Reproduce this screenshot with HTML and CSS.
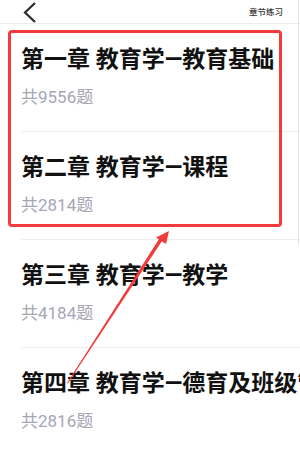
FILE: index.html
```html
<!DOCTYPE html>
<html lang="zh-CN">
<head>
    <meta charset="UTF-8">
    <meta name="viewport" content="width=device-width, initial-scale=1.0">
    <title>章节练习</title>
    <link rel="stylesheet" href="styles.css">
</head>
<body>
    <div class="page">
        <div class="topbar">
            <svg class="back" width="16" height="22" viewBox="0 0 16 22">
                <path d="M13 2 L3 11.5 L13 21" fill="none" stroke="#2b2b2b" stroke-width="2.2"/>
            </svg>
            <span class="topbar-title">章节练习</span>
        </div>

        <!-- 章节列表 -->
        <ul class="chapter-list">
            <li class="chapter">
                <div class="chapter-name">第一章 教育学—教育基础</div>
                <div class="chapter-count">共9556题</div>
            </li>
            <li class="chapter">
                <div class="chapter-name">第二章 教育学—课程</div>
                <div class="chapter-count">共2814题</div>
            </li>
            <li class="chapter">
                <div class="chapter-name">第三章 教育学—教学</div>
                <div class="chapter-count">共4184题</div>
            </li>
            <li class="chapter">
                <div class="chapter-name">第四章 教育学—德育及班级管理</div>
                <div class="chapter-count">共2816题</div>
            </li>
        </ul>

        <div class="scroll-line"></div>

        <!-- 标注 -->
        <div class="mark-box"></div>
        <svg class="mark-arrow" width="300" height="452" viewBox="0 0 300 452">
            <polygon points="67,383 67.8,383.4 163,239.5 160,237.5" fill="#f23b3b"/>
            <polygon points="169,231 166,244 156,237.5" fill="#f23b3b"/>
        </svg>
    </div>
</body>
</html>
```

FILE: styles.css
```css
* {
    margin: 0;
    padding: 0;
    box-sizing: border-box;
}

body {
    font-family: Roboto, 'Noto Sans CJK SC', sans-serif;
    background: #fff;
    color: #111;
}

.page {
    position: relative;
    width: 300px;
    height: 452px;
    overflow: hidden;
}

.topbar {
    height: 24px;
    border-bottom: 1px solid #ececec;
    display: flex;
    align-items: center;
    justify-content: space-between;
    padding: 0 17px 0 22px;
}

.back {
    display: block;
    margin-top: 1px;
}

.topbar-title {
    font-size: 8.5px;
    color: #333;
    font-weight: 500;
    margin-top: -1px;
}

.chapter-list {
    list-style: none;
}

.chapter {
    margin-left: 21px;
    padding: 22px 0 21px 0;
    border-bottom: 1px solid #ededed;
    white-space: nowrap;
}

.chapter-name {
    font-size: 23px;
    line-height: 28px;
    font-weight: 700;
    color: #111;
}

.chapter-count {
    margin-top: 10px;
    font-size: 17px;
    line-height: 26px;
    color: #a6a6b4;
}

.scroll-line {
    position: absolute;
    top: 0;
    right: 1px;
    width: 1px;
    height: 245px;
    background: #e6e6e6;
}

.mark-box {
    position: absolute;
    left: 8px;
    top: 30px;
    width: 274px;
    height: 197px;
    border: 3px solid #f23b3b;
    border-radius: 4px;
}

.mark-arrow {
    position: absolute;
    left: 0;
    top: 0;
}
```
